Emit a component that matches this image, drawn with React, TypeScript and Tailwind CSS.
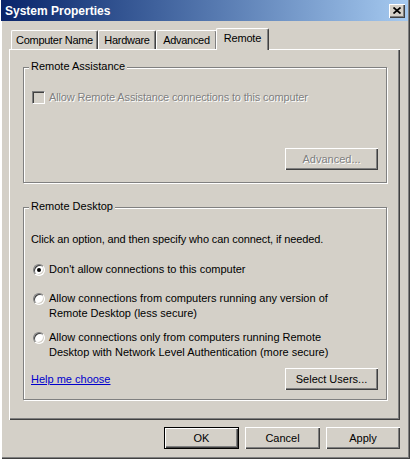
const raised = 'shadow-[inset_1px_1px_#fff,inset_-1px_-1px_#404040,inset_-2px_-2px_#808080]';
const etched = 'border border-[#808080] shadow-[1px_1px_#fff,inset_1px_1px_#fff]';
const disabledText = 'text-[#808080] [text-shadow:1px_1px_0_#fff]';

function TitleBar() {
  return (
    <div className="ml-[1px] mr-[2px] h-[21px] flex items-center bg-linear-to-r from-[#0a246a] to-[#a6caf0]">
      <span className="pl-[4px] text-[12px] font-bold text-white leading-[14px]">System Properties</span>
      <div className="flex-1" />
      <button className={`w-[16px] h-[14px] mr-[3px] bg-[#d4d0c8] flex items-center justify-center ${raised}`}>
        <svg width="8" height="7" viewBox="0 0 8 7">
          <path d="M0.5 0.5 7.5 6.5 M7.5 0.5 0.5 6.5" stroke="#000" strokeWidth="1.7" fill="none" />
        </svg>
      </button>
    </div>
  );
}

function Tab({ label, width, selected }: { label: string; width: string; selected?: boolean }) {
  if (selected) {
    return (
      <div
        className={`${width} ml-[-1px] h-[22px] mb-[-1px] relative z-10 bg-[#d4d0c8] rounded-t-[2px] border-t border-l border-white border-r border-r-[#404040] shadow-[inset_-1px_0_#808080] flex items-center justify-center pb-[3px] tracking-[-0.2px]`}
      >
        {label}
      </div>
    );
  }
  return (
    <div
      className={`${width} h-[19px] rounded-t-[2px] border-t border-l border-white border-r border-r-[#404040] shadow-[inset_-1px_0_#808080] flex items-center justify-center pt-[1px] tracking-[-0.3px]`}
    >
      {label}
    </div>
  );
}

function Radio({ checked }: { checked?: boolean }) {
  return (
    <span className="w-[12px] h-[12px] mt-[2px] shrink-0 rounded-full bg-white border border-t-[#808080] border-l-[#808080] border-b-white border-r-white shadow-[inset_1px_1px_#404040,inset_-1px_-1px_#d4d0c8] flex items-center justify-center">
      {checked && <span className="w-[4px] h-[4px] rounded-full bg-black" />}
    </span>
  );
}

function Button({ label, width, disabled, isDefault }: { label: string; width: string; disabled?: boolean; isDefault?: boolean }) {
  return (
    <button
      className={`${width} h-[22px] bg-[#d4d0c8] flex items-center justify-center ${raised} ${isDefault ? 'border border-black' : ''} ${disabled ? disabledText : ''}`}
    >
      {label}
    </button>
  );
}

export default function App() {
  return (
    <div className="w-[410px] h-[459px] bg-[#d4d0c8] font-['Liberation_Sans',Arial,sans-serif] text-[11px] leading-[13px] text-black flex flex-col overflow-hidden shadow-[inset_2px_0_#fff,inset_-1px_-1px_#404040,inset_-2px_-2px_#808080]">
      <TitleBar />

      <div className="mt-[7px] h-[21px] flex items-end pl-[11px]">
        <Tab label="Computer Name" width="w-[87px]" />
        <Tab label="Hardware" width="w-[58px]" />
        <Tab label="Advanced" width="w-[61px]" />
        <Tab label="Remote" width="w-[53px]" selected />
      </div>

      <div className={`ml-[9px] w-[391px] h-[371px] flex flex-col pl-[14px] pt-[18px] ${raised}`}>
        <div className={`relative w-[364px] h-[116px] flex flex-col ${etched}`}>
          <span className="absolute top-[-8px] left-[5px] px-[2px] bg-[#d4d0c8]">Remote Assistance</span>
          <div className="pt-[23px] pl-[8px] flex items-center gap-[4px]">
            <span className="w-[13px] h-[13px] bg-[#d4d0c8] border border-t-[#808080] border-l-[#808080] border-b-white border-r-white shadow-[inset_1px_1px_#404040,inset_-1px_-1px_#d4d0c8]" />
            <span className={`tracking-[-0.15px] ${disabledText}`}>Allow Remote Assistance connections to this computer</span>
          </div>
          <div className="mt-auto self-end mr-[8px] mb-[12px]">
            <Button label="Advanced..." width="w-[93px]" disabled />
          </div>
        </div>

        <div className={`relative mt-[24px] w-[364px] h-[193px] flex flex-col ${etched}`}>
          <span className="absolute top-[-8px] left-[5px] px-[2px] bg-[#d4d0c8]">Remote Desktop</span>
          <p className="pt-[25px] pl-[7px] tracking-[-0.1px]">Click an option, and then specify who can connect, if needed.</p>

          <div className="mt-[16px] pl-[9px] flex items-start gap-[4px] leading-[15px]">
            <Radio checked />
            <span>Don't allow connections to this computer</span>
          </div>
          <div className="mt-[14px] pl-[9px] flex items-start gap-[4px] leading-[15px]">
            <Radio />
            <span>
              Allow connections from computers running any version of
              <br />
              Remote Desktop (less secure)
            </span>
          </div>
          <div className="mt-[9px] pl-[9px] flex items-start gap-[4px] leading-[15px]">
            <Radio />
            <span>
              Allow connections only from computers running Remote
              <br />
              Desktop with Network Level Authentication (more secure)
            </span>
          </div>

          <div className="mt-[8px] pl-[7px] pr-[8px] flex items-center justify-between">
            <a className="text-[#0000cc] underline">Help me choose</a>
            <Button label="Select Users..." width="w-[93px]" />
          </div>
        </div>
      </div>

      <div className="mt-[7px] pr-[10px] flex justify-end gap-[6px]">
        <Button label="OK" width="w-[75px]" isDefault />
        <Button label="Cancel" width="w-[75px]" />
        <Button label="Apply" width="w-[74px]" />
      </div>
    </div>
  );
}
